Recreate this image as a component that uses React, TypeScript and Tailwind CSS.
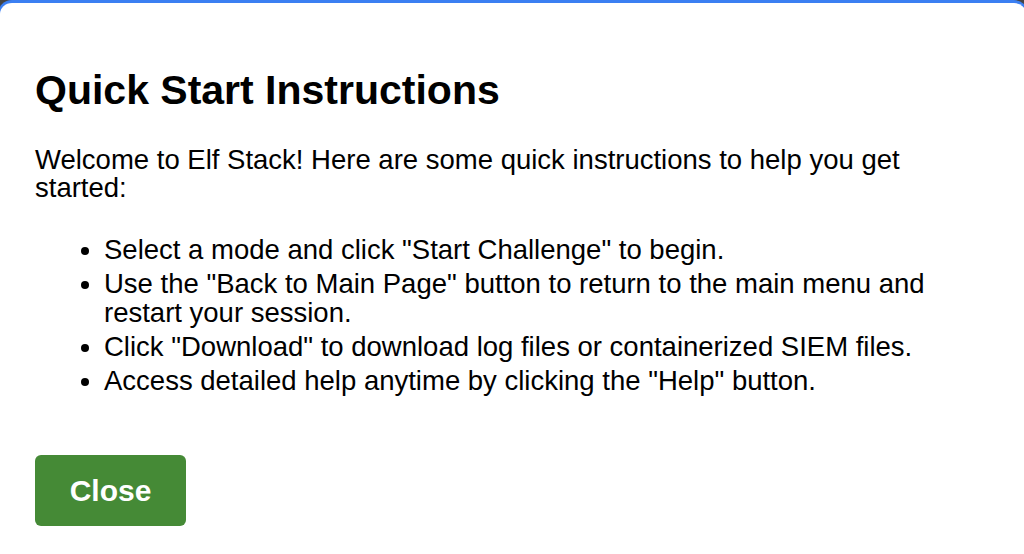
export default function App() {
  const items = [
    'Select a mode and click "Start Challenge" to begin.',
    'Use the "Back to Main Page" button to return to the main menu and restart your session.',
    'Click "Download" to download log files or containerized SIEM files.',
    'Access detailed help anytime by clicking the "Help" button.',
  ]

  return (
    <div className="h-[554px] w-[1024px] overflow-hidden bg-[#444444]">
      <div
        className="-ml-[2px] h-[600px] w-[1030px] rounded-[14px] border-t-[3px] border-x-2 border-[#3b7ff2] bg-white pl-[35px] pr-[60px] pt-[63px] text-black"
        style={{ fontFamily: '"Liberation Sans", Arial, sans-serif' }}
      >
        <h1 className="text-[41px] font-bold leading-[48px]">Quick Start Instructions</h1>

        <p className="mt-[32px] max-w-[890px] text-[27.5px] leading-[28px]">
          Welcome to Elf Stack! Here are some quick instructions to help you get started:
        </p>

        <ul className="mt-[33px] list-disc pl-[69px] text-[27.5px] leading-[29px]">
          {items.map((item) => (
            <li key={item} className="mb-[5px] max-w-[840px]">
              {item}
            </li>
          ))}
        </ul>

        <button className="mt-[60px] flex h-[71px] w-[151px] items-center justify-center rounded-[6px] bg-[#458a36] text-[30px] font-bold text-white">
          Close
        </button>
      </div>
    </div>
  )
}
